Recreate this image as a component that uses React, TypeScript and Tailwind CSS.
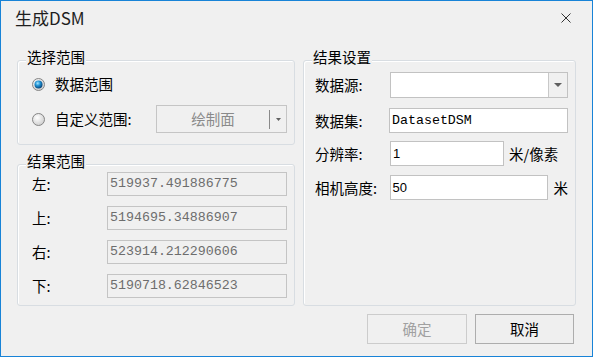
import React from 'react';

const cjk = { fontFamily: '"Noto Sans CJK SC", "Noto Sans", sans-serif' };

function Radio({ checked }: { checked?: boolean }) {
  return (
    <svg width="13" height="13" viewBox="0 0 13 13" className="shrink-0">
      <defs>
        <radialGradient id="rOff" cx="0.4" cy="0.35" r="0.75">
          <stop offset="0" stopColor="#ffffff" />
          <stop offset="1" stopColor="#c8c8c8" />
        </radialGradient>
        <radialGradient id="rOn" cx="0.4" cy="0.35" r="0.7">
          <stop offset="0" stopColor="#a5e6ff" />
          <stop offset="0.45" stopColor="#1e90d2" />
          <stop offset="1" stopColor="#083a6b" />
        </radialGradient>
      </defs>
      <circle cx="6.5" cy="6.5" r="6" fill="url(#rOff)" stroke="#858585" strokeWidth="1" />
      {checked && <circle cx="6.5" cy="6.5" r="4" fill="url(#rOn)" />}
    </svg>
  );
}

function Group({ title, className, children }: { title: string; className: string; children: React.ReactNode }) {
  return (
    <div className={`relative border border-[#d8dde2] rounded-[3px] shadow-[inset_1px_1px_0_#ffffff] ${className}`}>
      <span className="absolute left-[8px] top-[-14px] px-[1px] bg-[#f0f0f0] leading-[20px] text-black">{title}</span>
      {children}
    </div>
  );
}

function ReadOnly({ value }: { value: string }) {
  return (
    <div
      className="w-[180px] h-[24px] border border-[#c4c4c4] bg-[#f0f0f0] pl-[2px] flex items-center text-[#6d6d6d] text-[13.3px]"
      style={{ fontFamily: '"Liberation Mono", monospace' }}
    >
      {value}
    </div>
  );
}

function Field({ w, children, mono }: { w: string; children?: React.ReactNode; mono?: boolean }) {
  return (
    <div
      className={`${w} h-[25px] border border-[#c2c2c2] bg-white pl-[2px] flex items-center text-black ${mono ? 'text-[13.3px]' : 'text-[13px]'}`}
      style={{ fontFamily: mono ? '"Liberation Mono", monospace' : '"Liberation Sans", Arial, sans-serif' }}
    >
      {children}
    </div>
  );
}

export default function App() {
  return (
    <div className="w-[593px] h-[357px] bg-[#f0f0f0] border border-[#1883d7] flex flex-col text-[14.5px]" style={cjk}>
      {/* title bar */}
      <div className="h-[34px] flex items-center justify-between pl-[14px] pr-[21px]">
        <span className="text-[17px] text-[#1e1e1e]">生成DSM</span>
        <svg width="10" height="10" viewBox="0 0 10 10">
          <path d="M0.5 0.5 L9.5 9.5 M9.5 0.5 L0.5 9.5" stroke="#333" strokeWidth="1" />
        </svg>
      </div>

      <div className="flex gap-[8px] pl-[16px] mt-[25px]">
        {/* left column */}
        <div className="flex flex-col w-[278px]">
          <Group title="选择范围" className="h-[85px] pt-[11px] pl-[14px] pr-[7px]">
            <div className="h-[24px] flex items-center gap-[10px]">
              <Radio checked />
              <span>数据范围</span>
            </div>
            <div className="h-[28px] mt-[9px] flex items-center">
              <Radio />
              <span className="ml-[10px]">自定义范围:</span>
              <div className="ml-auto w-[131px] h-[28px] border border-[#c5c5c5] bg-[#f0f0f0] flex items-center">
                <span className="flex-1 text-center text-[#8a8a8a]">绘制面</span>
                <div className="w-px h-[19px] bg-[#8a8a8a]" />
                <div className="w-[16px] flex justify-center">
                  <svg width="5" height="3" viewBox="0 0 5 3">
                    <path d="M0 0 H5 L2.5 3 Z" fill="#606060" />
                  </svg>
                </div>
              </div>
            </div>
          </Group>

          <Group title="结果范围" className="h-[142px] mt-[19px] pt-[7px] pl-[14px] pr-[7px] flex flex-col gap-[10px]">
            {[
              ['左:', '519937.491886775'],
              ['上:', '5194695.34886907'],
              ['右:', '523914.212290606'],
              ['下:', '5190718.62846523'],
            ].map(([k, v]) => (
              <div key={k} className="flex items-center justify-between">
                <span>{k}</span>
                <ReadOnly value={v} />
              </div>
            ))}
          </Group>
        </div>

        {/* right column */}
        <Group title="结果设置" className="w-[273px] h-[246px] pt-[11px] pl-[11px] pr-[7px]">
          <div className="flex items-center">
            <span className="w-[75px]">数据源:</span>
            <div className="w-[178px] h-[26px] border border-[#c2c2c2] bg-white flex justify-end">
              <div className="w-[19px] h-full border-l border-[#c8c8c8] bg-[#f0f0f0] flex items-center justify-center">
                <svg width="8" height="4" viewBox="0 0 8 4">
                  <path d="M0 0 H8 L4 4 Z" fill="#5f5f5f" />
                </svg>
              </div>
            </div>
          </div>
          <div className="flex items-center mt-[10px]">
            <span className="w-[74px]">数据集:</span>
            <Field w="w-[179px]" mono>DatasetDSM</Field>
          </div>
          <div className="flex items-center mt-[8px]">
            <span className="w-[75px]">分辨率:</span>
            <Field w="w-[114px]">1</Field>
            <span className="ml-[5px]">米/像素</span>
          </div>
          <div className="flex items-center mt-[9px]">
            <span className="w-[75px]">相机高度:</span>
            <Field w="w-[159px]">50</Field>
            <span className="ml-[6px]">米</span>
          </div>
        </Group>
      </div>

      <div className="flex justify-end gap-[8px] pr-[18px] mt-[8px]">
        <button className="w-[100px] h-[30px] border border-[#cccccc] bg-[#f0f0f0] text-[#a0a0a0]">确定</button>
        <button className="w-[99px] h-[30px] border border-[#adadad] bg-[#efefef] text-black">取消</button>
      </div>
    </div>
  );
}
